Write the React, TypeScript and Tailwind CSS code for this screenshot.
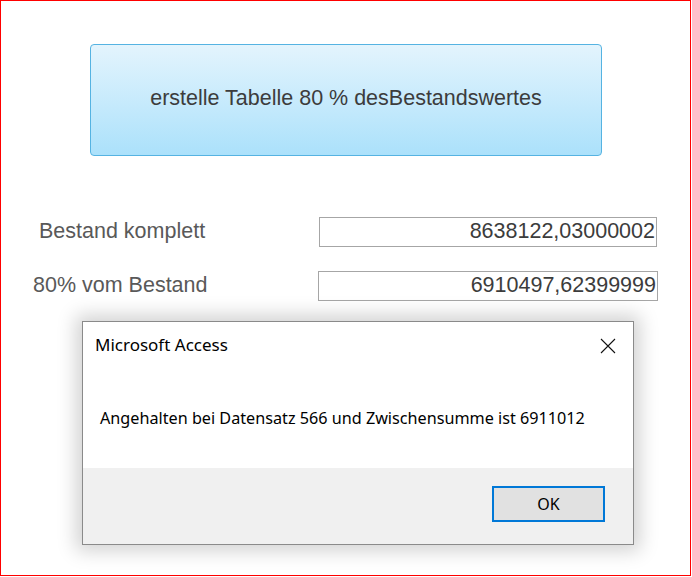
import React from "react";

export default function App() {
  return (
    <div className="relative w-[692px] h-[577px] bg-white" style={{ fontFamily: '"Liberation Sans", Arial, sans-serif' }}>
      <div className="w-[691px] h-[576px] border border-[#ff0000] flex flex-col">
        <button className="ml-[89px] mt-[43px] w-[512px] h-[112px] rounded-[4px] border border-[#55b3e2] bg-gradient-to-b from-[#e3f4fd] to-[#abe1fb] text-[21.5px] leading-none text-[#3c3c3c] flex items-center justify-center pb-[2px]">
          erstelle Tabelle 80 % desBestandswertes
        </button>
        <div className="mt-[61px] h-[30px] flex items-center">
          <div className="ml-[38px] w-[280px] text-[21.5px] leading-none text-[#595959]">Bestand komplett</div>
          <div className="w-[338px] h-[30px] border border-[#a6a6a6] flex items-center justify-end pr-[1px] text-[21.5px] leading-none text-[#3c3c3c]">
            8638122,03000002
          </div>
        </div>
        <div className="mt-[24px] h-[30px] flex items-center">
          <div className="ml-[32px] w-[285px] text-[21.5px] leading-none text-[#595959]">80% vom Bestand</div>
          <div className="w-[340px] h-[30px] border border-[#a6a6a6] flex items-center justify-end pr-[1px] text-[21.5px] leading-none text-[#3c3c3c]">
            6910497,62399999
          </div>
        </div>
      </div>

      <div
        className="absolute left-[82px] top-[321px] w-[552px] h-[224px] border border-[#8a8a8a] bg-white flex flex-col shadow-[0_0_18px_6px_rgba(0,0,0,0.18)]"
        style={{ fontFamily: '"Noto Sans", "Open Sans", sans-serif' }}
      >
        <div className="flex-1 flex flex-col">
          <div className="flex items-center justify-between pt-[12px] pl-[12px] pr-[17px] h-[34px]">
            <span className="text-[17px] leading-[22px] text-black">Microsoft Access</span>
            <svg width="16" height="16" viewBox="0 0 16 16" className="mt-[1px]">
              <path d="M1 1 L15 15 M15 1 L1 15" stroke="#111" strokeWidth="1.1" fill="none" />
            </svg>
          </div>
          <div className="mt-[51px] pl-[17px] text-[16.2px] leading-[22px] text-black">
            Angehalten bei Datensatz 566 und Zwischensumme ist 6911012
          </div>
        </div>
        <div className="h-[76px] bg-[#f0f0f0] flex justify-end items-start pt-[18px] pr-[28px]">
          <button className="w-[113px] h-[36px] border-2 border-[#0078d7] bg-[#e1e1e1] text-[16px] leading-none text-black flex items-center justify-center">
            OK
          </button>
        </div>
      </div>
    </div>
  );
}
